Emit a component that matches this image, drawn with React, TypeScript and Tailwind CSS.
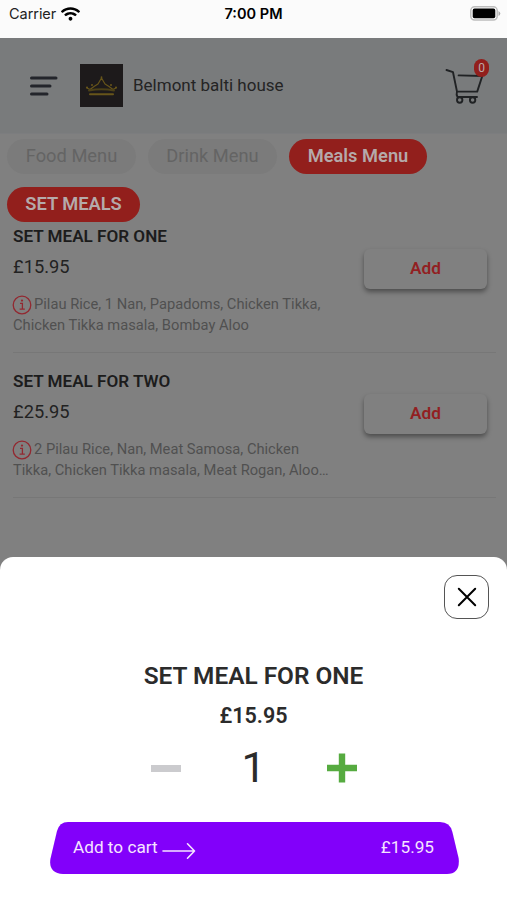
import React from 'react';
import {FaWifi} from "react-icons/fa";

const MEALS = [
    {
        title: "SET MEAL FOR ONE",
        price: "£15.95",
        lines: ["Pilau Rice, 1 Nan, Papadoms, Chicken Tikka,", "Chicken Tikka masala, Bombay Aloo"],
    },
    {
        title: "SET MEAL FOR TWO",
        price: "£25.95",
        lines: ["2 Pilau Rice, Nan, Meat Samosa, Chicken", "Tikka, Chicken Tikka masala, Meat Rogan, Aloo…"],
    },
];

const StatusBar = () => (
    <div className="grid grid-cols-3 items-start h-[38px] pt-[5px] bg-[#fbfbfb] text-black font-['Inter',sans-serif]">
        <div className="flex flex-row items-center gap-[5px] pl-[9px] h-[18px]">
            <span className="text-[14.5px] leading-[18px] tracking-[-0.05px] text-[#222]">Carrier</span>
            <FaWifi className="w-[19px] h-[16px]"/>
        </div>
        <p className="text-center text-[14.5px] leading-[18px] font-semibold">7:00 PM</p>
        <svg width="31" height="15" viewBox="0 0 31 15" className="justify-self-end mr-[6px] mt-px">
            <rect x="0.8" y="0.8" width="26.4" height="13.2" rx="3.8" fill="#fff" stroke="#bdbdbd" strokeWidth="1.5"/>
            <rect x="2.7" y="2.6" width="22.6" height="9.6" rx="1.8" fill="#000"/>
            <path d="M28.5 5v5q1.8-1 1.8-2.5T28.5 5z" fill="#aaa"/>
        </svg>
    </div>
);

const Header = () => (
    <header className="flex flex-row items-center h-[96px] bg-[#797b7c] border-b border-[#7c7d7f] pl-[28px] pr-[17px]">
        <svg width="30" height="24" viewBox="0 0 30 24" fill="none" stroke="#23252b" strokeWidth="3" strokeLinecap="round">
            <path d="M3.5 4H28M3.5 12H22M3.5 20H19"/>
        </svg>
        <svg width="43" height="43" viewBox="0 0 43 43" className="ml-[22px]">
            <rect width="43" height="43" fill="#1d1a1b"/>
            <g fill="none" stroke="#67551a" strokeLinecap="round" strokeLinejoin="round">
                <path d="M7 24L10 25.5L14 22.5L18 20L21.5 14L25 20L29 22.5L33 25.5L36 24" strokeWidth="1.2"/>
                <path d="M9 26.5Q21.5 24 34 26.5" stroke="#4b4018" strokeWidth="2"/>
                <path d="M10 30.3H33" strokeWidth="2"/>
            </g>
            <g fill="#67551a">
                <circle cx="7" cy="23.5" r="1.1"/>
                <circle cx="12" cy="21" r="1"/>
                <circle cx="21.5" cy="13.2" r="0.9"/>
                <circle cx="31" cy="21" r="1"/>
                <circle cx="36" cy="23.5" r="1.1"/>
            </g>
        </svg>
        <h1 className="ml-[10px] text-[17px] text-[#242424]">Belmont balti house</h1>
        <div className="relative ml-auto w-[45px] h-[46px]">
            <svg width="45" height="46" viewBox="0 0 45 46" fill="none" stroke="#202224" strokeWidth="1.9" strokeLinecap="round" strokeLinejoin="round">
                <path d="M1.5 7L8 9.2L12 28.6H32.2L37.3 13L13.6 12.4M12 28.6Q11 32 12.5 34H32"/>
                <circle cx="14.7" cy="37" r="2.7"/>
                <circle cx="27.6" cy="37" r="2.7"/>
            </svg>
            <span className="absolute left-[29px] -top-[4px] w-[15px] h-[18px] rounded-full bg-[#921f1c] text-[#bcaaaa] text-[12px] leading-[18px] text-center">0</span>
        </div>
    </header>
);

const InfoIcon = () => (
    <svg width="20" height="20" viewBox="0 0 20 20" className="inline-block align-[-6px] mr-[2px] -ml-px" fill="none" stroke="#922830" strokeWidth="1.3">
        <circle cx="10" cy="10" r="8.8"/>
        <path d="M8 8.4H10.4V14M7.6 14.2H12.8" strokeWidth="1.3"/>
        <circle cx="10" cy="5.6" r="0.5" fill="#922830"/>
    </svg>
);

const MealSheet = () => (
    <section className="absolute bottom-0 left-0 w-full h-[343px] bg-white rounded-t-[13px] flex flex-col items-center text-[#2b2b2b]">
        <button className="self-end mr-[18px] mt-[18px] w-[45px] h-[44px] rounded-[13px] border-[1.5px] border-[#555] flex items-center justify-center">
            <svg width="20" height="20" viewBox="0 0 20 20" stroke="#000" strokeWidth="2" strokeLinecap="round">
                <path d="M1.8 1.8L18.2 18.2M18.2 1.8L1.8 18.2"/>
            </svg>
        </button>
        <h2 className="mt-[42px] text-[24.4px] leading-[30px] font-semibold">SET MEAL FOR ONE</h2>
        <p className="mt-[12px] text-[21.5px] leading-[26px] font-semibold">£15.95</p>
        <div className="flex flex-row items-center justify-between w-[207px] h-[50px] mt-[14px] ml-px">
            <div className="w-[30px] h-[7px] bg-[#cbcbce]"/>
            <span className="text-[43px] leading-[50px] mr-px -mt-[2px]">1</span>
            <svg width="30" height="30" viewBox="0 0 30 30" stroke="#56ab40" strokeWidth="6.4">
                <path d="M0 15H30M15 0.5V29.5"/>
            </svg>
        </div>
        <button className="relative flex flex-row items-center w-[409px] h-[52px] mt-[29px] ml-[2px] pl-[23px] pr-[25px] text-[17.2px] text-[#f5e4ff]">
            <svg width="409" height="52" viewBox="0 0 409 52" className="absolute inset-0" fill="#8200fa">
                <path d="M18 0H390Q400 0 402.4 10L408.6 36Q410.6 52 397 52H13Q-1.6 51 0.4 37L7 9Q9.5 0 18 0z"/>
            </svg>
            <span className="relative">Add to cart</span>
            <svg width="34" height="18" viewBox="0 0 34 18" className="relative ml-[4px] mt-[5px]" fill="none" stroke="#f5e4ff" strokeWidth="1.6" strokeLinecap="round" strokeLinejoin="round">
                <path d="M1 9H32.5M25.5 1.8L32.5 9L25.5 16.2"/>
            </svg>
            <span className="relative ml-auto">£15.95</span>
        </button>
    </section>
);

const App = () => {
    return (
        <div className="relative w-[507px] h-[900px] overflow-hidden bg-[#808080] font-['Roboto',sans-serif]">
            <StatusBar/>
            <Header/>
            <nav className="flex flex-row gap-[12px] pl-[7px] pt-[5px] text-[18.3px] leading-[34px] text-center">
                <span className="w-[129px] h-[35px] rounded-full bg-[#7b7b7b] text-[#646464]">Food Menu</span>
                <span className="w-[129px] h-[35px] rounded-full bg-[#7b7b7b] text-[#646464]">Drink Menu</span>
                <span className="w-[138px] h-[35px] rounded-full bg-[#921f1c] text-[#b5aaaa] font-semibold">Meals Menu</span>
            </nav>
            <div className="pl-[7px] mt-[13px] h-[35px]">
                <span className="block w-[133px] h-[35px] rounded-full bg-[#921f1c] text-[#b5aaaa] text-[18.3px] leading-[34px] font-semibold text-center">SET MEALS</span>
            </div>
            <main className="px-[13px] pr-[11px]">
                {MEALS.map((meal) => (
                    <article key={meal.title} className="flex flex-row justify-between h-[131px] mb-[14px] border-b border-[#777]">
                        <div className="pt-[4px] whitespace-nowrap">
                            <h3 className="text-[17.1px] leading-[20px] font-semibold text-[#1c1c1c]">{meal.title}</h3>
                            <p className="mt-[10px] text-[18.3px] leading-[22px] text-[#222]">{meal.price}</p>
                            <p className="mt-[16px] text-[14.7px] leading-[21px] text-[#505050]">
                                <InfoIcon/>{meal.lines[0]}<br/>{meal.lines[1]}
                            </p>
                        </div>
                        <button className="w-[123px] h-[40px] mt-[27px] mr-[9px] rounded-[6px] bg-[#808080] shadow-[0_3px_5px_rgba(0,0,0,0.4)] text-[17.2px] font-semibold text-[#921f22]">Add</button>
                    </article>
                ))}
            </main>
            <MealSheet/>
        </div>
    );
};

export default App;
